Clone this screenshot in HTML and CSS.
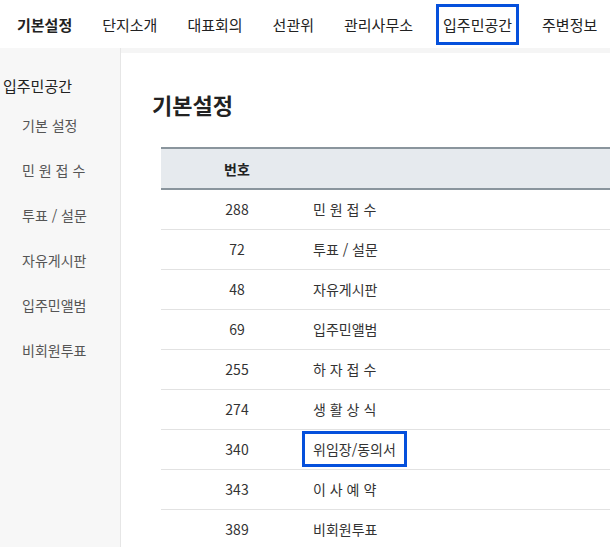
FILE: index.html
```html
<!DOCTYPE html>
<html lang="ko">
<head>
    <meta charset="UTF-8">
    <title>입주민공간 - 기본설정</title>
    <link rel="stylesheet" href="styles.css">
</head>
<body>
    <!-- 상단 메뉴 -->
    <div class="top-nav">
        <a class="nav-item active">기본설정</a>
        <a class="nav-item">단지소개</a>
        <a class="nav-item">대표회의</a>
        <a class="nav-item">선관위</a>
        <a class="nav-item">관리사무소</a>
        <a class="nav-item mark">입주민공간</a>
        <a class="nav-item">주변정보</a>
    </div>

    <div class="wrap">
        <!-- 좌측 메뉴 -->
        <div class="side">
            <div class="side-title">입주민공간</div>
            <ul class="side-menu">
                <li>기본 설정</li>
                <li>민 원 접 수</li>
                <li>투표 / 설문</li>
                <li>자유게시판</li>
                <li>입주민앨범</li>
                <li>비회원투표</li>
            </ul>
        </div>

        <div class="content">
            <h1>기본설정</h1>
            <table class="board">
                <thead>
                    <tr><th class="num">번호</th><th></th></tr>
                </thead>
                <tbody>
                    <tr><td class="num">288</td><td>민 원 접 수</td></tr>
                    <tr><td class="num">72</td><td>투표 / 설문</td></tr>
                    <tr><td class="num">48</td><td>자유게시판</td></tr>
                    <tr><td class="num">69</td><td>입주민앨범</td></tr>
                    <tr><td class="num">255</td><td>하 자 접 수</td></tr>
                    <tr><td class="num">274</td><td>생 활 상 식</td></tr>
                    <tr><td class="num">340</td><td><span class="mark-cell">위임장/동의서</span></td></tr>
                    <tr><td class="num">343</td><td>이 사 예 약</td></tr>
                    <tr><td class="num">389</td><td>비회원투표</td></tr>
                </tbody>
            </table>
        </div>
    </div>
</body>
</html>
```

FILE: styles.css
```css
* {
    margin: 0;
    padding: 0;
    box-sizing: border-box;
}
body {
    font-family: 'Noto Sans CJK KR', 'Noto Sans', sans-serif;
    color: #222;
    background: #f5f5f5;
    width: 610px;
    height: 547px;
    overflow: hidden;
}

/* 상단 메뉴 */
.top-nav {
    height: 48px;
    background: #fff;
    display: flex;
    align-items: center;
    gap: 30px;
    padding-left: 17px;
    white-space: nowrap;
    overflow: hidden;
}
.nav-item {
    font-size: 15px;
    color: #222;
}
.nav-item.active {
    font-weight: bold;
}
.nav-item.mark {
    display: inline-block;
    padding: 7px 4px;
    margin: 0 -7px;
    border: 3px solid #0550dc;
}

.wrap {
    display: flex;
    height: 499px;
}

/* 좌측 메뉴 */
.side {
    width: 121px;
    flex-shrink: 0;
    background: #f7f7f7;
    border-right: 1px solid #e6e6e6;
    padding-top: 27px;
}
.side-title {
    font-size: 15px;
    padding-left: 3px;
    color: #222;
}
.side-menu {
    list-style: none;
    padding-left: 22px;
    margin-top: 19px;
}
.side-menu li {
    font-size: 14px;
    color: #555;
    height: 45px;
}

.content {
    flex: 1;
    background: #fff;
    margin-top: 5px;
    padding: 35px 0 0 31px;
    min-width: 0;
}
.content h1 {
    font-size: 22px;
    font-weight: bold;
    color: #222;
    line-height: 32px;
}

/* 게시판 목록 */
.board {
    margin: 27px 0 0 9px;
    width: 449px;
    border-collapse: collapse;
    font-size: 14px;
    color: #333;
}
.board th {
    background: #e6eaee;
    border-top: 2px solid #8a959d;
    border-bottom: 2px solid #8a959d;
    height: 41px;
    font-weight: bold;
    color: #222;
}
.board td {
    height: 40px;
    border-bottom: 1px solid #e2e2e2;
    padding-left: 0;
}
.board .num {
    width: 152px;
    text-align: center;
}
.mark-cell {
    display: inline-block;
    padding: 5px 8px;
    margin: -8px -11px;
    border: 3px solid #0550dc;
}
```
